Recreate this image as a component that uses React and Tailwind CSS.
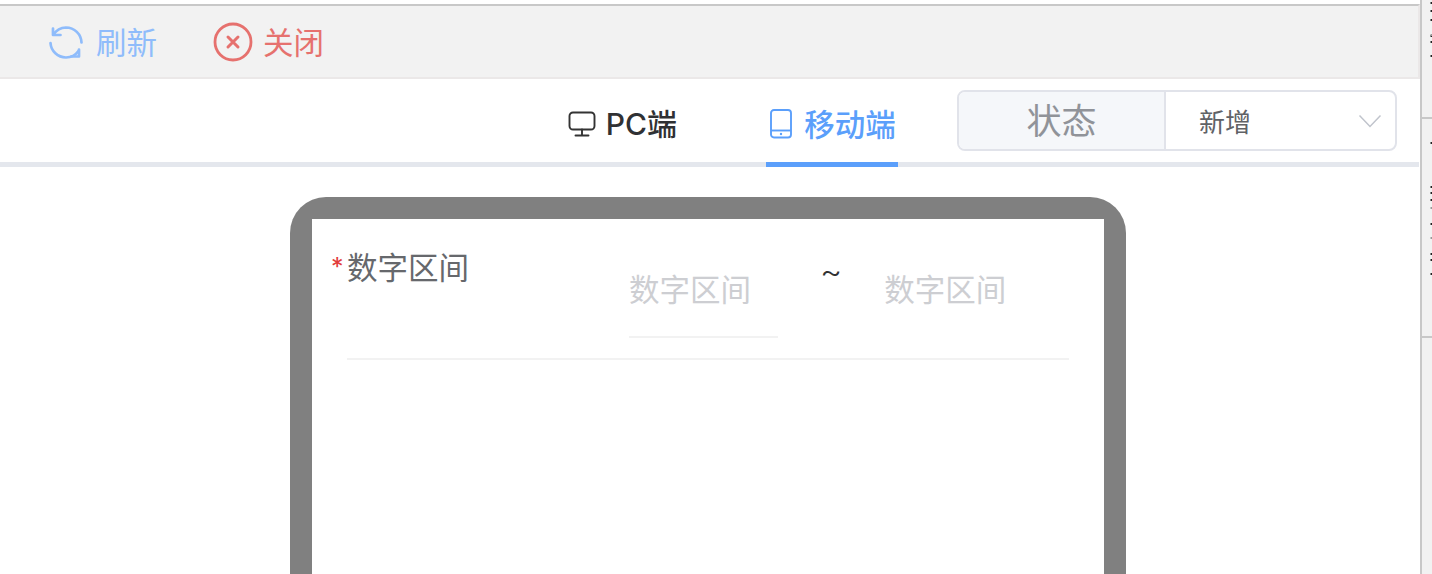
import React from "react";

const cjk = "font-['Inter','Noto_Sans_CJK_SC',sans-serif]";

// ends of clipped text from the neighbouring panel
const specks = [2, 10, 19, 35, 41, 55, 142, 186, 192, 199, 223, 253, 259, 273];
const faintSpecks = [34, 207, 237];

const RefreshIcon = () => (
  <svg width="34" height="34" viewBox="0 0 34 34" fill="none" stroke="#8fbcfb" strokeWidth="2.7" strokeLinecap="round" strokeLinejoin="round">
    <path d="M4.5 9.5A15.5 15.5 0 0 1 17 2.5 15.5 15.5 0 0 1 32.5 17.5" />
    <path d="M4 3.5v6.5h7.5" />
    <path d="M1.5 18A15.5 15.5 0 0 0 17 32.5 15.5 15.5 0 0 0 29.5 26" />
    <path d="M30 24.5v7h-7.5" />
  </svg>
);

const CloseIcon = () => (
  <svg width="40" height="40" viewBox="0 0 40 40" fill="none" stroke="#e6716e" strokeLinecap="round">
    <circle cx="20" cy="20" r="18" strokeWidth="2.8" />
    <path d="M15 15l10 10M25 15L15 25" strokeWidth="3" />
  </svg>
);

const MonitorIcon = () => (
  <svg width="28" height="26" viewBox="0 0 28 26" fill="none" stroke="#333" strokeWidth="1.9" strokeLinecap="round" strokeLinejoin="round">
    <rect x="1.5" y="1.5" width="25" height="17" rx="3.5" />
    <path d="M14 18.5v6M7.5 24.5h13" />
  </svg>
);

const PadIcon = () => (
  <svg width="22" height="30" viewBox="0 0 22 30" fill="none" stroke="#5b9ffb" strokeWidth="1.9" strokeLinejoin="round">
    <rect x="1" y="1" width="20" height="27.5" rx="3" />
    <path d="M1 21.5h20" />
    <circle cx="11" cy="25" r="1.2" fill="#5b9ffb" stroke="none" />
  </svg>
);

const Chevron = () => (
  <svg width="24" height="14" viewBox="0 0 24 14" fill="none" stroke="#c0c4cc" strokeWidth="1.5">
    <path d="M1.5 1.5L12 12.5 22.5 1.5" />
  </svg>
);

export default function App() {
  return (
    <div className={`flex h-[574px] w-[1432px] overflow-hidden bg-white antialiased ${cjk}`}>
      {/* main column */}
      <div className="flex w-[1420px] flex-col">
        <div className="h-[4px] bg-white" />
        <div className="flex h-[75px] items-center border-t-2 border-r-2 border-b-2 border-t-[#c8c8c8] border-r-[#ebe8e8] border-b-[#ebe8e8] bg-[#f2f2f2] pl-[49px]">
          <button className="flex items-center gap-[13px] text-[30.5px] text-[#8fbcfb]">
            <RefreshIcon />
            <span className="pt-[2px]">刷新</span>
          </button>
          <button className="ml-[56px] flex items-center gap-[10px] text-[30.5px] text-[#e6716e]">
            <CloseIcon />
            <span className="pt-[2px]">关闭</span>
          </button>
        </div>

        {/* tab row */}
        <div className="mr-[1px] flex h-[88px] items-start justify-end border-b-[5px] border-[#e4e7ed] pr-[22px]">
          <div className="flex h-[88px] items-start">
            <div className="flex h-[88px] items-center gap-[10px] pt-[2px] text-[30px] font-medium text-[#303133]">
              <MonitorIcon />
              <span>PC端</span>
            </div>
            <div className="ml-[89px] flex h-[88px] w-[132px] items-center justify-center gap-[12px] border-b-[5px] border-[#5b9ffb] pt-[6px] pl-[2px] text-[30.5px] font-medium text-[#5b9ffb]">
              <PadIcon />
              <span className="pt-[2px]">移动端</span>
            </div>
          </div>
          <div className="mt-[11px] ml-[59px] flex h-[61px] w-[440px] overflow-hidden rounded-[8px] border-2 border-[#e1e3ea]">
            <div className="flex w-[207px] items-center justify-center border-r-2 border-[#e1e3ea] bg-[#f5f7fa] pt-[2px] text-[35px] text-[#909399]">
              状态
            </div>
            <div className="flex flex-1 items-center justify-between pr-[13px] pl-[33px] text-[26px] text-[#606266]">
              <span className="pt-[4px]">新增</span>
              <Chevron />
            </div>
          </div>
        </div>

        {/* phone preview */}
        <div className="flex min-h-0 flex-1 justify-center pt-[30px] pr-[4px]">
          <div className="h-[500px] w-[836px] rounded-t-[36px] bg-[#808080] px-[22px] pt-[22px]">
            <div className="h-full bg-white px-[35px]">
              <div className="flex h-[141px] w-[722px] border-b-2 border-[#f2f2f2]">
                <label className="relative flex h-fit pt-[26px] text-[30.5px] leading-[46px] text-[#66686c]">
                  <span className="absolute top-[25px] -left-[16px] text-[25px] text-[#e23b3b]">*</span>
                  数字区间
                </label>
                <div className="ml-[160px] h-[119px] w-[149px] border-b-2 border-[#f2f2f2] pt-[48px] text-[30.5px] leading-[46px] text-[#cdced2]">
                  数字区间
                </div>
                <div className="ml-[42px] pt-[29px] text-[34px] leading-[46px] font-light text-[#303133]">~</div>
                <div className="ml-[42px] pt-[48px] text-[30.5px] leading-[46px] text-[#cdced2]">数字区间</div>
              </div>
            </div>
          </div>
        </div>
      </div>

      {/* neighbouring panel */}
      <div className="relative flex w-[12px] flex-col border-l-2 border-[#c8c8c8] bg-[#f2f2f2]">
        <div className="h-[119px] border-b-2 border-[#c8c8c8]" />
        <div className="h-[219px] border-b-2 border-[#c8c8c8]" />
        <svg className="absolute top-0 right-0" width="2" height="280">
          {specks.map((y) => (
            <rect key={y} x="0.5" y={y} width="1.5" height="2" fill="#222" />
          ))}
          {faintSpecks.map((y) => (
            <rect key={y} x="0.5" y={y} width="1.5" height="2" fill="#999" />
          ))}
        </svg>
      </div>
    </div>
  );
}
